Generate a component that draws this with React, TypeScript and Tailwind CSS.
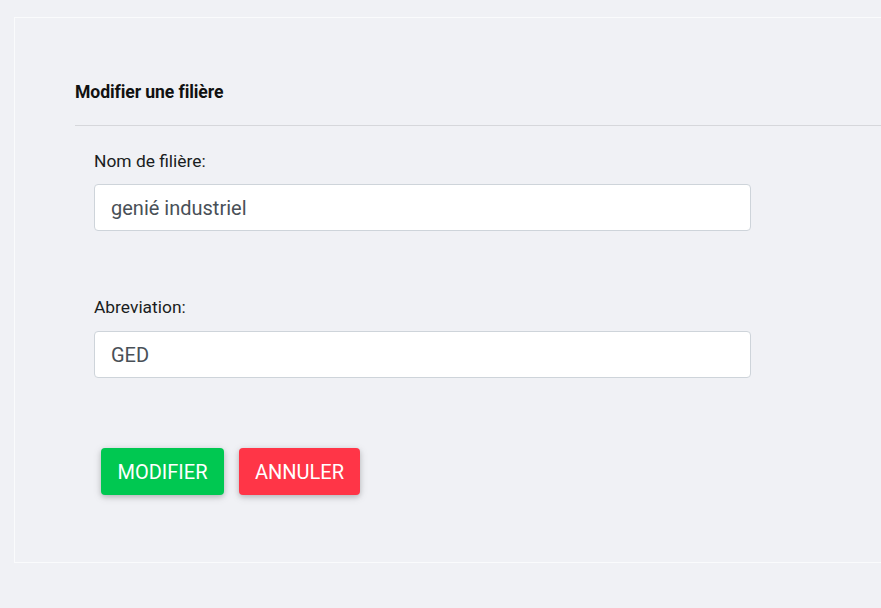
import React from "react";

export default function App() {
  return (
    <div className="min-h-[608px] w-[881px] overflow-hidden bg-[#f0f1f5] pt-[17px] pl-[14px]" style={{ fontFamily: "Roboto, 'Liberation Sans', sans-serif" }}>
      <div className="w-[900px] h-[546px] border border-[#fafbfc] pl-[60px] pt-[62px]">
        <h5 className="text-[17.6px] leading-[25px] font-bold text-[#111] tracking-[-0.1px]">Modifier une filière</h5>
        <div className="mt-[20px] h-px bg-[#d6d7db]" />
        <form className="pl-[19px] pt-[23px]">
          <label className="block text-[17.4px] leading-[25px] text-[#1a1d21]">Nom de filière:</label>
          <input
            readOnly
            value="genié industriel"
            className="mt-[10px] block w-[657px] h-[47px] rounded-[4px] border border-[#ced4da] bg-white px-[16px] text-[20px] text-[#495057] outline-none"
          />
          <label className="mt-[64px] block text-[17.4px] leading-[25px] text-[#1a1d21]">Abreviation:</label>
          <input
            readOnly
            value="GED"
            className="mt-[11px] block w-[657px] h-[47px] rounded-[4px] border border-[#ced4da] bg-white px-[16px] text-[20px] text-[#495057] outline-none"
          />
          <div className="mt-[70px] flex gap-[15px] pl-[7px]">
            <button type="button" className="h-[47px] w-[123px] rounded-[4px] bg-[#00c851] text-white text-[20px] uppercase shadow-[0_2px_5px_0_rgba(0,0,0,0.16),0_2px_10px_0_rgba(0,0,0,0.12)]">Modifier</button>
            <button type="button" className="h-[47px] w-[121px] rounded-[4px] bg-[#ff3547] text-white text-[20px] uppercase shadow-[0_2px_5px_0_rgba(0,0,0,0.16),0_2px_10px_0_rgba(0,0,0,0.12)]">Annuler</button>
          </div>
        </form>
      </div>
    </div>
  );
}
